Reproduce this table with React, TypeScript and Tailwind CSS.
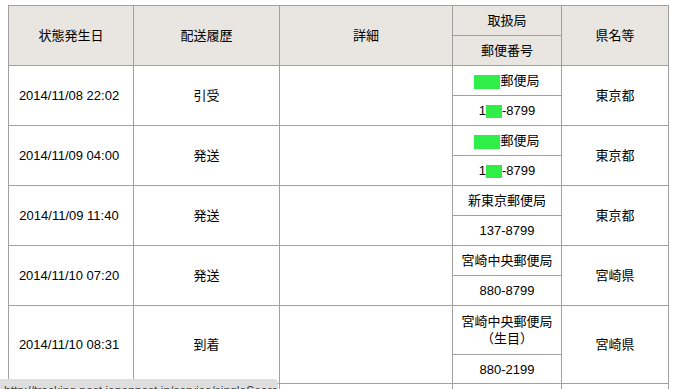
import React from "react";

type Row = {
  date: string;
  status: string;
  office: React.ReactNode;
  zip: React.ReactNode;
  pref: string;
  tall?: boolean;
};

const Mask = ({ w, h }: { w: string; h: string }) => (
  <span className={`inline-block ${w} ${h} bg-[#30ee48] align-middle`} />
);

const rows: Row[] = [
  {
    date: "2014/11/08 22:02",
    status: "引受",
    office: (
      <>
        <Mask w="w-[26px]" h="h-[14px]" />
        郵便局
      </>
    ),
    zip: (
      <>
        1<Mask w="w-[16px]" h="h-[13px]" />-8799
      </>
    ),
    pref: "東京都",
  },
  {
    date: "2014/11/09 04:00",
    status: "発送",
    office: (
      <>
        <Mask w="w-[26px]" h="h-[14px]" />
        郵便局
      </>
    ),
    zip: (
      <>
        1<Mask w="w-[16px]" h="h-[13px]" />-8799
      </>
    ),
    pref: "東京都",
  },
  { date: "2014/11/09 11:40", status: "発送", office: "新東京郵便局", zip: "137-8799", pref: "東京都" },
  { date: "2014/11/10 07:20", status: "発送", office: "宮崎中央郵便局", zip: "880-8799", pref: "宮崎県" },
  {
    date: "2014/11/10 08:31",
    status: "到着",
    office: (
      <>
        宮崎中央郵便局
        <br />
        （生目）
      </>
    ),
    zip: "880-2199",
    pref: "宮崎県",
    tall: true,
  },
  // next row begins just below the fold
  { date: "", status: "", office: "", zip: "", pref: "" },
];

const cell = "bg-white flex items-center justify-center text-center";
const head = "bg-[#e9e5e1] flex items-center justify-center text-center";

export default function App() {
  // grid rows: 2 header rows + 2 per body row
  const rowHeights = ["29px", "29px"];
  rows.forEach((r) => {
    if (r.tall) rowHeights.push("48px", "28px");
    else rowHeights.push("29px", "29px");
  });

  return (
    <div
      className="relative h-[389px] w-[673px] overflow-hidden bg-white pl-2 pt-[5px] text-[13px] leading-[17px] text-black"
      style={{ fontFamily: '"Liberation Sans", "Noto Sans CJK JP", sans-serif' }}
    >
      <div
        className="grid w-[661px] gap-px border border-[#a0a0a0] bg-[#a0a0a0] grid-cols-[124px_145px_172px_108px_106px]"
        style={{ gridTemplateRows: rowHeights.join(" ") }}
      >
        <div className={`${head} row-span-2`}>状態発生日</div>
        <div className={`${head} row-span-2`}>配送履歴</div>
        <div className={`${head} row-span-2`}>詳細</div>
        <div className={head}>取扱局</div>
        <div className={`${head} row-span-2`}>県名等</div>
        <div className={`${head} col-start-4`}>郵便番号</div>

        {rows.map((r, i) => (
          <React.Fragment key={i}>
            <div className={`${cell} row-span-2 pr-1`}>{r.date}</div>
            <div className={`${cell} row-span-2`}>{r.status}</div>
            <div className={`${cell} row-span-2`}></div>
            <div className={cell}>
              <span>{r.office}</span>
            </div>
            <div className={`${cell} row-span-2`}>{r.pref}</div>
            <div className={`${cell} col-start-4`}>
              <span>{r.zip}</span>
            </div>
          </React.Fragment>
        ))}
      </div>

      {/* browser status bubble */}
      <div className="absolute bottom-0 left-0 h-[10px] w-[278px] overflow-hidden rounded-tr-[4px] bg-[#dedede] pl-1 pt-[5px] text-[12px] leading-[14px] whitespace-nowrap text-[#444]">
        http://tracking.post.japanpost.jp/service/singleSearch.do
      </div>
    </div>
  );
}
